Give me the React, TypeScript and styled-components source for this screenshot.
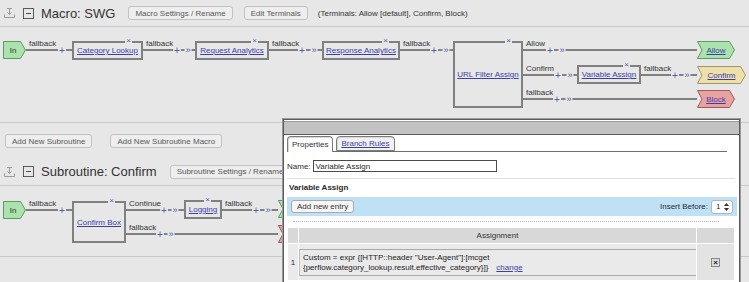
import React from 'react';
import styled, { createGlobalStyle } from 'styled-components';

const CANVAS_BG = '#e7e7e7';
const LINK = '#3d3da8';
const WIRE = '#808080';
const GLYPH = '#4d5cae';

const GlobalStyle = createGlobalStyle`
  html, body {
    margin: 0;
    padding: 0;
    background: ${CANVAS_BG};
  }

  body {
    color: #2a2a2a;
    font-family: 'Liberation Sans', Arial, sans-serif;
    font-size: 8px;
    overflow: hidden;
  }
`;

type TerminalKind = 'in' | 'allow' | 'confirm' | 'block';

interface NodeSpec {
  x: number;
  y: number;
  w: number;
  h: number;
  label: string;
}

interface TerminalSpec extends NodeSpec {
  kind: TerminalKind;
}

interface EdgeSpec {
  x1: number;
  x2: number;
  y: number;
  label: string;
  plus: number;
  arrow?: number;
}

const TERMINAL_COLORS: Record<TerminalKind, { fill: string; stroke: string }> = {
  allow: { fill: '#abe3ac', stroke: '#5f9a60' },
  block: { fill: '#e8a2a2', stroke: '#9c5b5b' },
  confirm: { fill: '#ede0a9', stroke: '#a3956a' },
  in: { fill: '#abe3ac', stroke: '#5f9a60' }
};

const Page = styled.div`
  position: relative;
  width: 749px;
  height: 282px;
  overflow: hidden;
`;

const SectionHeader = styled.div<{ $height: number }>`
  display: flex;
  align-items: center;
  height: ${({ $height }) => $height}px;
  padding-left: 3px;
  border-bottom: 1px solid #c9c9c9;
  white-space: nowrap;
`;

const DockIcon = styled.svg`
  width: 12px;
  height: 12px;
  margin-right: 8px;
  flex: none;
`;

const Collapse = styled.span`
  position: relative;
  box-sizing: border-box;
  width: 11px;
  height: 11px;
  margin-right: 7px;
  border: 1px solid #5a5a5a;
  flex: none;

  &::after {
    content: '';
    position: absolute;
    left: 2px;
    right: 2px;
    top: 4px;
    height: 1px;
    background: #4a4a4a;
  }
`;

const Title = styled.span<{ $gap: number }>`
  margin-right: ${({ $gap }) => $gap}px;
  color: #333;
  font-size: 13px;
`;

const Button = styled.span<{ $gap?: number }>`
  display: inline-flex;
  align-items: center;
  box-sizing: border-box;
  height: 14px;
  margin-right: ${({ $gap }) => $gap ?? 0}px;
  padding: 0 6px;
  border: 1px solid #c2c2c2;
  border-radius: 3px;
  background: #eeeeee;
  color: #575757;
  font-size: 8px;
  flex: none;
`;

const Note = styled.span`
  color: #333;
  font-size: 8px;
`;

const Toolbar = styled.div`
  display: flex;
  align-items: flex-start;
  height: 35px;
  padding: 11px 0 0 5px;
  box-sizing: border-box;
`;

const Canvas = styled.div<{ $height: number }>`
  position: relative;
  height: ${({ $height }) => $height}px;
  border-bottom: 1px solid #c9c9c9;
`;

const Wires = styled.svg`
  position: absolute;
  left: 0;
  top: 0;
  width: 100%;
  height: 100%;
`;

const Node = styled.div`
  position: absolute;
  box-sizing: border-box;
  display: flex;
  align-items: center;
  justify-content: center;
  border: 2px solid ${WIRE};
  background: ${CANVAS_BG};
`;

const Link = styled.span`
  color: ${LINK};
  font-size: 8px;
  text-decoration: underline;
  white-space: nowrap;
`;

const Port = styled.span`
  position: absolute;
  top: -7px;
  right: 9px;
  padding: 0 1px;
  color: ${GLYPH};
  background: ${CANVAS_BG};
  font-size: 8px;
  line-height: 9px;
`;

const Terminal = styled.div<{ $kind: TerminalKind }>`
  position: absolute;
  display: flex;
  align-items: center;
  justify-content: center;
  padding-left: ${({ $kind }) => ($kind === 'in' ? 0 : 3)}px;
  padding-right: 3px;
  box-sizing: border-box;
  color: #333;
  font-size: 8px;

  svg {
    position: absolute;
    left: 0;
    top: 0;
  }

  span {
    position: relative;
  }
`;

const WireLabel = styled.span`
  position: absolute;
  color: #333;
  font-size: 8px;
  line-height: 10px;
  white-space: nowrap;
`;

const Glyph = styled.span<{ $size: number }>`
  position: absolute;
  transform: translate(-50%, -50%);
  padding: 0 1px;
  background: ${CANVAS_BG};
  color: ${GLYPH};
  font-size: ${({ $size }) => $size}px;
  line-height: ${({ $size }) => $size}px;
`;

/* popup */

const Dialog = styled.div`
  position: absolute;
  left: 283px;
  top: 119px;
  width: 457px;
  height: 175px;
  box-sizing: border-box;
  border: 1px solid #5a5a5a;
  box-shadow: 0 0 0 1px #9a9a9a;
  background: #fff;
  z-index: 2;
`;

const DialogBar = styled.div`
  height: 13px;
  margin-top: 1px;
  border-bottom: 1px solid #5a5a5a;
  background: #c2c2c2;
  box-shadow: inset 0 1px 0 #9a9a9a;
`;

const DialogBody = styled.div`
  padding: 0 2px 0 3px;
`;

const Tabs = styled.div`
  display: flex;
  align-items: flex-end;
  height: 16px;
  margin-right: 10px;
  border-bottom: 1px solid #6d6d6d;
`;

const Tab = styled.span<{ $active?: boolean }>`
  display: inline-flex;
  align-items: center;
  box-sizing: border-box;
  height: ${({ $active }) => ($active ? 16 : 15)}px;
  margin-right: 3px;
  margin-bottom: ${({ $active }) => ($active ? -1 : 0)}px;
  padding: 0 4px;
  border: 1px solid #7a7a7a;
  border-bottom: ${({ $active }) => ($active ? 'none' : '1px solid #7a7a7a')};
  border-radius: 4px 4px 0 0;
  box-shadow: inset 1px 1px 0 #d8d8d8;
  background: ${({ $active }) => ($active ? '#fff' : '#f1f1f1')};
  color: ${({ $active }) => ($active ? '#333' : LINK)};
  text-decoration: ${({ $active }) => ($active ? 'none' : 'underline')};
  font-size: 8px;
`;

const NameRow = styled.div`
  display: flex;
  align-items: center;
  gap: 2px;
  margin-top: 8px;
  font-size: 8px;
`;

const NameInput = styled.span`
  display: flex;
  align-items: center;
  box-sizing: border-box;
  width: 184px;
  height: 12px;
  padding: 0 2px;
  border: 1px solid #4a4a4a;
  font-size: 8px;
`;

const Divider = styled.div`
  margin: 6px 2px 0 0;
  border-top: 1px solid #dedede;
`;

const SubTitle = styled.div`
  margin: 4px 0 0 2px;
  font-size: 8px;
  font-weight: bold;
  line-height: 10px;
`;

const Band = styled.div`
  display: flex;
  align-items: center;
  justify-content: space-between;
  height: 19px;
  margin: 4px 0 0 0;
  padding: 0 4px;
  background: #bfe1f6;
`;

const BandButton = styled.span`
  display: inline-flex;
  align-items: center;
  box-sizing: border-box;
  height: 13px;
  padding: 0 5px;
  border: 1px solid #a9a9a9;
  border-radius: 3px;
  background: #f6f6f6;
  color: #333;
  font-size: 8px;
`;

const InsertBefore = styled.span`
  display: flex;
  align-items: center;
  gap: 3px;
  font-size: 8px;
`;

const Select = styled.span`
  display: inline-flex;
  align-items: center;
  justify-content: space-between;
  box-sizing: border-box;
  width: 22px;
  height: 14px;
  padding: 0 3px 0 4px;
  border: 1px solid #b5b5b5;
  border-radius: 3px;
  background: #fff;
  font-size: 8px;
`;

const Dotted = styled.div`
  margin: 5px 18px 0 6px;
  border-top: 1px dotted #b9b9b9;
`;

const Grid = styled.div`
  display: grid;
  grid-template-columns: 10px 1fr 37px;
  grid-template-rows: 15px 36px;
  gap: 1px;
  margin: 6px 3px 0 1px;
`;

const HeadCell = styled.div`
  display: flex;
  align-items: center;
  justify-content: center;
  background: #d8d8d8;
  color: #333;
  font-size: 8px;
`;

const Cell = styled.div<{ $shade?: string }>`
  display: flex;
  align-items: center;
  justify-content: center;
  background: ${({ $shade }) => $shade ?? '#eaeaea'};
  font-size: 8px;
`;

const ValueBox = styled.div`
  align-self: center;
  box-sizing: border-box;
  width: 100%;
  height: 27px;
  padding: 3px 3px 0 3px;
  border-top: 1px solid #a9a9a9;
  border-bottom: 1px solid #a9a9a9;
  border-left: 1px solid #bdbdbd;
  color: #222;
  font-size: 8px;
  line-height: 10px;
  white-space: nowrap;
`;

const ChangeLink = styled(Link)`
  margin-left: 8px;
`;

const DeleteIcon = styled.span`
  display: inline-flex;
  align-items: center;
  justify-content: center;
  box-sizing: border-box;
  width: 9px;
  height: 9px;
  border: 1px solid #8a8a8a;
  background: #dcdcdc;
  color: #222;
  font-size: 8px;
  font-weight: bold;
  line-height: 7px;
`;

function HeaderIcon (): React.ReactElement {
  return (
    <DockIcon viewBox='0 0 12 12'>
      <g fill='none' stroke='#9a9a9a' strokeWidth='1'>
        <path d='M4 1.5h5M6.5 1.5v6M4.5 5.5l2 2 2-2' />
        <path d='M1.5 7.5v3h10v-3' />
      </g>
    </DockIcon>
  );
}

function TerminalShape ({ h, kind, w }: { w: number; h: number; kind: TerminalKind }): React.ReactElement {
  const { fill, stroke } = TERMINAL_COLORS[kind];
  const m = h / 2;
  const points = kind === 'in'
    ? `0.5,0.5 ${w - 5.5},0.5 ${w - 0.5},${m} ${w - 5.5},${h - 0.5} 0.5,${h - 0.5}`
    : `0.5,0.5 ${w - 5.5},0.5 ${w - 0.5},${m} ${w - 5.5},${h - 0.5} 0.5,${h - 0.5} 5,${m}`;

  return (
    <svg height={h} width={w}>
      <polygon fill={fill} points={points} stroke={stroke} strokeWidth='1' />
    </svg>
  );
}

function Diagram ({ edges, height, nodes, terminals }: { height: number; nodes: NodeSpec[]; terminals: TerminalSpec[]; edges: EdgeSpec[] }): React.ReactElement {
  return (
    <Canvas $height={height}>
      <Wires>
        {edges.map((e, i) => (
          <line
            key={i}
            stroke={WIRE}
            strokeWidth='2'
            x1={e.x1}
            x2={e.x2}
            y1={e.y}
            y2={e.y}
          />
        ))}
      </Wires>
      {edges.map((e, i) => (
        <React.Fragment key={i}>
          <WireLabel style={{ left: e.x1 + 3, top: e.y - 11 }}>{e.label}</WireLabel>
          <Glyph
            $size={10}
            style={{ left: e.plus, top: e.y + 1 }}
          >+</Glyph>
          {e.arrow !== undefined && (
            <Glyph
              $size={9}
              style={{ left: e.arrow, top: e.y }}
            >»</Glyph>
          )}
        </React.Fragment>
      ))}
      {nodes.map((n) => (
        <Node
          key={n.label}
          style={{ height: n.h, left: n.x, top: n.y, width: n.w }}
        >
          <Link>{n.label}</Link>
          <Port>×</Port>
        </Node>
      ))}
      {terminals.map((t) => (
        <Terminal
          $kind={t.kind}
          key={t.kind + t.y}
          style={{ height: t.h, left: t.x, top: t.y, width: t.w }}
        >
          <TerminalShape
            h={t.h}
            kind={t.kind}
            w={t.w}
          />
          {t.label && (t.kind === 'in' ? <span>{t.label}</span> : <Link>{t.label}</Link>)}
        </Terminal>
      ))}
    </Canvas>
  );
}

const macroNodes: NodeSpec[] = [
  { h: 19, label: 'Category Lookup', w: 71, x: 72, y: 14 },
  { h: 19, label: 'Request Analytics', w: 74, x: 195, y: 14 },
  { h: 19, label: 'Response Analytics', w: 78, x: 322, y: 14 },
  { h: 67, label: 'URL Filter Assign', w: 70, x: 453, y: 14 },
  { h: 19, label: 'Variable Assign', w: 64, x: 577, y: 38 }
];

const macroTerminals: TerminalSpec[] = [
  { h: 18, kind: 'in', label: 'In', w: 23, x: 3, y: 14 },
  { h: 18, kind: 'allow', label: 'Allow', w: 38, x: 697, y: 14 },
  { h: 18, kind: 'confirm', label: 'Confirm', w: 49, x: 697, y: 39 },
  { h: 18, kind: 'block', label: 'Block', w: 38, x: 697, y: 63 }
];

const macroEdges: EdgeSpec[] = [
  { label: 'fallback', plus: 62, x1: 26, x2: 72, y: 23 },
  { arrow: 188, label: 'fallback', plus: 177, x1: 143, x2: 195, y: 23 },
  { arrow: 314, label: 'fallback', plus: 302, x1: 269, x2: 322, y: 23 },
  { arrow: 446, label: 'fallback', plus: 434, x1: 400, x2: 453, y: 23 },
  { arrow: 562, label: 'Allow', plus: 550, x1: 523, x2: 697, y: 23 },
  { arrow: 570, label: 'Confirm', plus: 558, x1: 523, x2: 577, y: 48 },
  { arrow: 687, label: 'fallback', plus: 675, x1: 641, x2: 697, y: 48 },
  { arrow: 569, label: 'fallback', plus: 557, x1: 523, x2: 697, y: 72 }
];

const subNodes: NodeSpec[] = [
  { h: 42, label: 'Confirm Box', w: 54, x: 72, y: 15 },
  { h: 19, label: 'Logging', w: 38, x: 184, y: 14 }
];

// the two outputs sit under the dialog, only their tips show
const subTerminals: TerminalSpec[] = [
  { h: 18, kind: 'in', label: 'In', w: 23, x: 3, y: 15 },
  { h: 18, kind: 'allow', label: '', w: 38, x: 278, y: 14 },
  { h: 18, kind: 'block', label: '', w: 38, x: 278, y: 39 }
];

const subEdges: EdgeSpec[] = [
  { label: 'fallback', plus: 62, x1: 26, x2: 72, y: 24 },
  { arrow: 175, label: 'Continue', plus: 164, x1: 126, x2: 184, y: 24 },
  { arrow: 268, label: 'fallback', plus: 256, x1: 222, x2: 278, y: 24 },
  { arrow: 171, label: 'fallback', plus: 160, x1: 126, x2: 278, y: 48 }
];

function SelectArrows (): React.ReactElement {
  return (
    <svg height='8' viewBox='0 0 5 8' width='5'>
      <path d='M2.5 0L5 3H0zM2.5 8L0 5h5z' fill='#333' />
    </svg>
  );
}

function VariableDialog (): React.ReactElement {
  return (
    <Dialog>
      <DialogBar />
      <DialogBody>
        <Tabs>
          <Tab $active>Properties</Tab>
          <Tab>Branch Rules</Tab>
        </Tabs>
        <NameRow>
          Name:
          <NameInput>Variable Assign</NameInput>
        </NameRow>
        <Divider />
        <SubTitle>Variable Assign</SubTitle>
        <Band>
          <BandButton>Add new entry</BandButton>
          <InsertBefore>
            Insert Before:
            <Select>1<SelectArrows /></Select>
          </InsertBefore>
        </Band>
        <Dotted />
        <Grid>
          <HeadCell />
          <HeadCell>Assignment</HeadCell>
          <HeadCell />
          <Cell>1</Cell>
          <Cell>
            <ValueBox>
              Custom = expr {'{'}[HTTP::header &quot;User-Agent&quot;]:[mcget
              <br />
              {'{'}perflow.category_lookup.result.effective_category{'}'}]{'}'}
              <ChangeLink>change</ChangeLink>
            </ValueBox>
          </Cell>
          <Cell $shade='#e3e3e3'>
            <DeleteIcon>×</DeleteIcon>
          </Cell>
        </Grid>
      </DialogBody>
    </Dialog>
  );
}

export default function App (): React.ReactElement {
  return (
    <Page>
      <GlobalStyle />
      <SectionHeader $height={26}>
        <HeaderIcon />
        <Collapse />
        <Title $gap={13}>Macro: SWG</Title>
        <Button $gap={11}>Macro Settings / Rename</Button>
        <Button $gap={10}>Edit Terminals</Button>
        <Note>(Terminals: Allow [default], Confirm, Block)</Note>
      </SectionHeader>
      <Diagram
        edges={macroEdges}
        height={95}
        nodes={macroNodes}
        terminals={macroTerminals}
      />
      <Toolbar>
        <Button $gap={18}>Add New Subroutine</Button>
        <Button>Add New Subroutine Macro</Button>
      </Toolbar>
      <SectionHeader $height={27}>
        <HeaderIcon />
        <Collapse />
        <Title $gap={13}>Subroutine: Confirm</Title>
        <Button>Subroutine Settings / Rename</Button>
      </SectionHeader>
      <Diagram
        edges={subEdges}
        height={70}
        nodes={subNodes}
        terminals={subTerminals}
      />
      <VariableDialog />
    </Page>
  );
}
